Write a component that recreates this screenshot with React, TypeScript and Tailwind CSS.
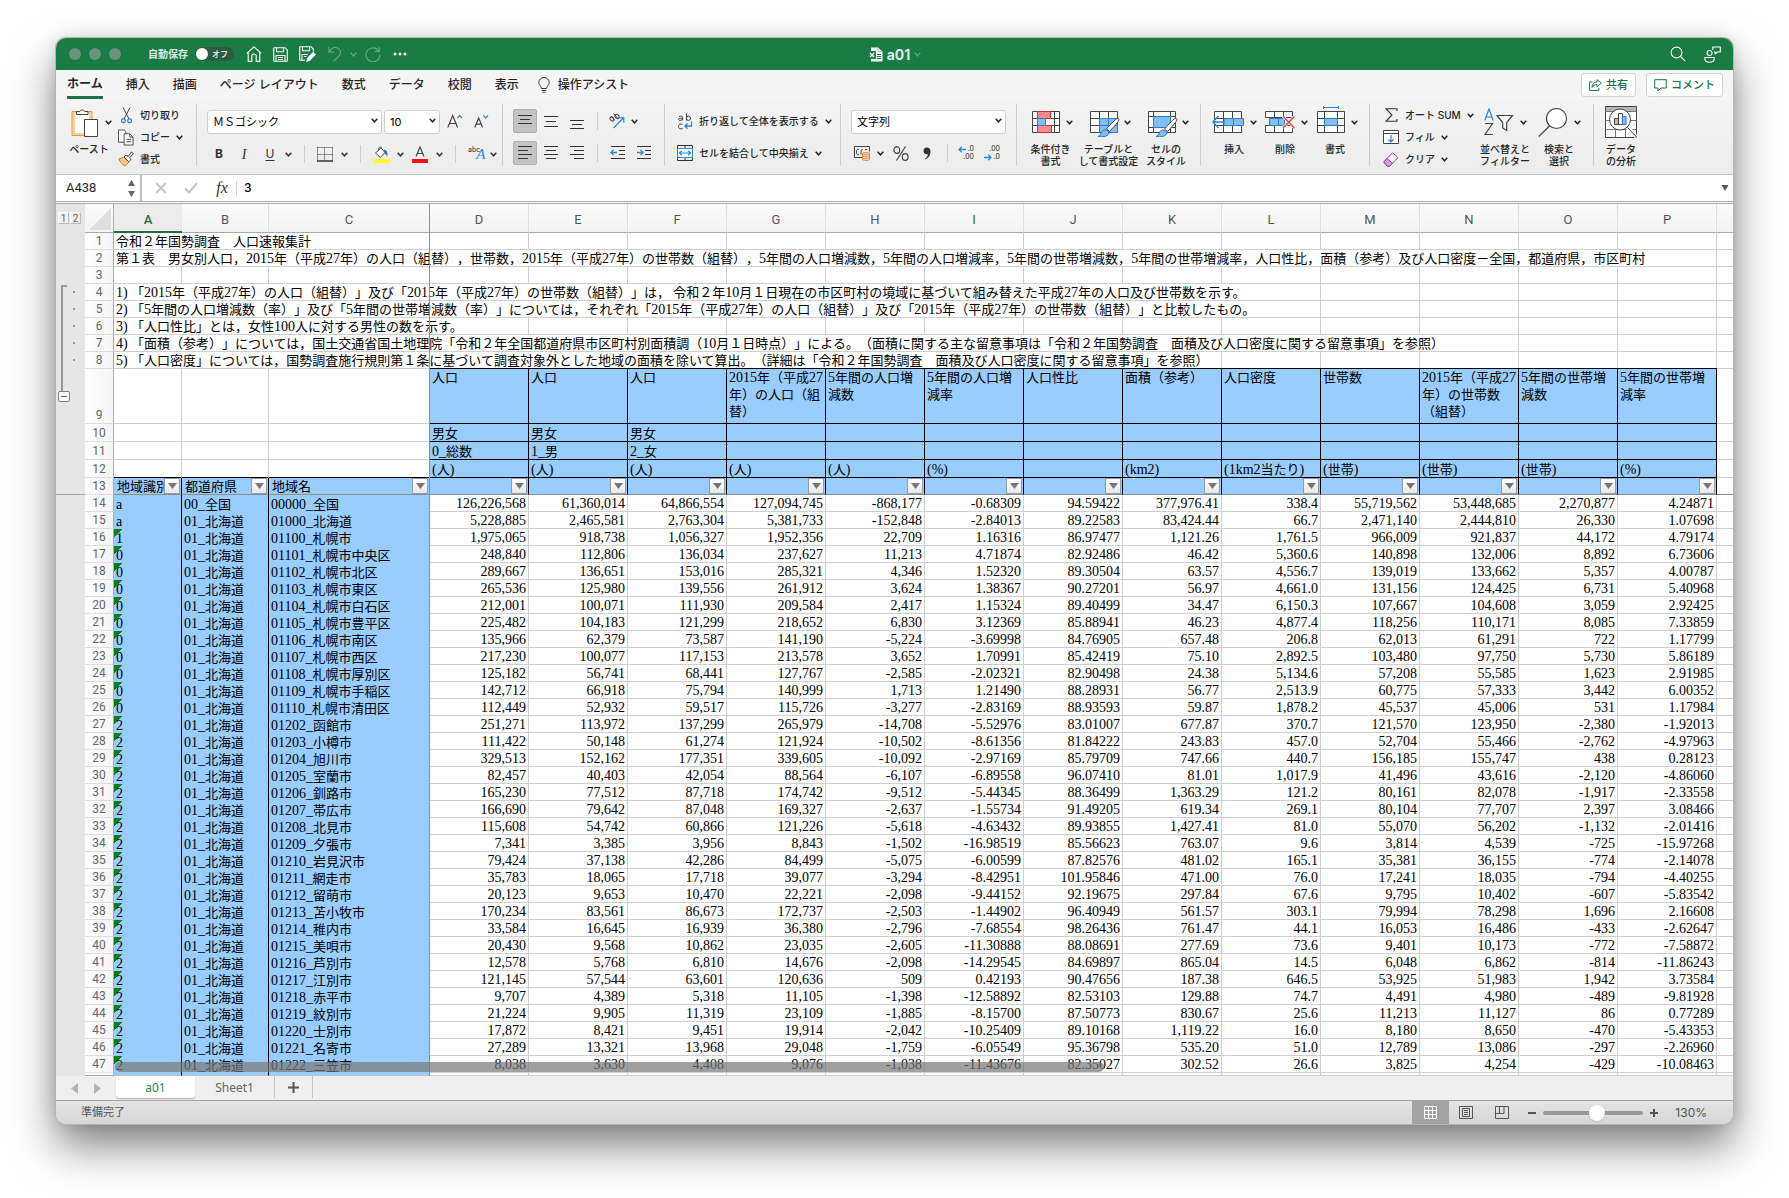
import { useState } from "react";
import type { ReactNode } from "react";

const letters = ["A", "B", "C", "D", "E", "F", "G", "H", "I", "J", "K", "L", "M", "N", "O", "P"]

// text of the rows above the table, span = how many columns the text runs over
const notes = [
  { row: 1, span: 3, text: "令和２年国勢調査　人口速報集計" },
  { row: 2, span: 16, text: "第１表　男女別人口，2015年（平成27年）の人口（組替），世帯数，2015年（平成27年）の世帯数（組替），5年間の人口増減数，5年間の人口増減率，5年間の世帯増減数，5年間の世帯増減率，人口性比，面積（参考）及び人口密度－全国，都道府県，市区町村" },
  { row: 3, span: 0, text: "" },
  { row: 4, span: 12, text: "1) 「2015年（平成27年）の人口（組替）」及び「2015年（平成27年）の世帯数（組替）」は， 令和２年10月１日現在の市区町村の境域に基づいて組み替えた平成27年の人口及び世帯数を示す。" },
  { row: 5, span: 12, text: "2) 「5年間の人口増減数（率）」及び「5年間の世帯増減数（率）」については，それぞれ「2015年（平成27年）の人口（組替）」及び「2015年（平成27年）の世帯数（組替）」と比較したもの。" },
  { row: 6, span: 4, text: "3) 「人口性比」とは，女性100人に対する男性の数を示す。" },
  { row: 7, span: 14, text: "4) 「面積（参考）」については，国土交通省国土地理院「令和２年全国都道府県市区町村別面積調（10月１日時点）」による。（面積に関する主な留意事項は「令和２年国勢調査　面積及び人口密度に関する留意事項」を参照）" },
  { row: 8, span: 11, text: "5) 「人口密度」については，国勢調査施行規則第１条に基づいて調査対象外とした地域の面積を除いて算出。（詳細は「令和２年国勢調査　面積及び人口密度に関する留意事項」を参照）" },
]

const titles = [
  "人口", "人口", "人口", "2015年（平成27年）の人口（組替）", "5年間の人口増減数", "5年間の人口増減率", "人口性比",
  "面積（参考）", "人口密度", "世帯数", "2015年（平成27年）の世帯数（組替）", "5年間の世帯増減数", "5年間の世帯増減率",
]

const subHeads = [
  { row: 10, cells: ["男女", "男女", "男女", "", "", "", "", "", "", "", "", "", ""] },
  { row: 11, cells: ["0_総数", "1_男", "2_女", "", "", "", "", "", "", "", "", "", ""] },
  { row: 12, cells: ["(人)", "(人)", "(人)", "(人)", "(人)", "(%)", "", "(km2)", "(1km2当たり)", "(世帯)", "(世帯)", "(世帯)", "(%)"] },
]

const data = `a|00_全国|00000_全国|126,226,568|61,360,014|64,866,554|127,094,745|-868,177|-0.68309|94.59422|377,976.41|338.4|55,719,562|53,448,685|2,270,877|4.24871
a|01_北海道|01000_北海道|5,228,885|2,465,581|2,763,304|5,381,733|-152,848|-2.84013|89.22583|83,424.44|66.7|2,471,140|2,444,810|26,330|1.07698
1|01_北海道|01100_札幌市|1,975,065|918,738|1,056,327|1,952,356|22,709|1.16316|86.97477|1,121.26|1,761.5|966,009|921,837|44,172|4.79174
0|01_北海道|01101_札幌市中央区|248,840|112,806|136,034|237,627|11,213|4.71874|82.92486|46.42|5,360.6|140,898|132,006|8,892|6.73606
0|01_北海道|01102_札幌市北区|289,667|136,651|153,016|285,321|4,346|1.52320|89.30504|63.57|4,556.7|139,019|133,662|5,357|4.00787
0|01_北海道|01103_札幌市東区|265,536|125,980|139,556|261,912|3,624|1.38367|90.27201|56.97|4,661.0|131,156|124,425|6,731|5.40968
0|01_北海道|01104_札幌市白石区|212,001|100,071|111,930|209,584|2,417|1.15324|89.40499|34.47|6,150.3|107,667|104,608|3,059|2.92425
0|01_北海道|01105_札幌市豊平区|225,482|104,183|121,299|218,652|6,830|3.12369|85.88941|46.23|4,877.4|118,256|110,171|8,085|7.33859
0|01_北海道|01106_札幌市南区|135,966|62,379|73,587|141,190|-5,224|-3.69998|84.76905|657.48|206.8|62,013|61,291|722|1.17799
0|01_北海道|01107_札幌市西区|217,230|100,077|117,153|213,578|3,652|1.70991|85.42419|75.10|2,892.5|103,480|97,750|5,730|5.86189
0|01_北海道|01108_札幌市厚別区|125,182|56,741|68,441|127,767|-2,585|-2.02321|82.90498|24.38|5,134.6|57,208|55,585|1,623|2.91985
0|01_北海道|01109_札幌市手稲区|142,712|66,918|75,794|140,999|1,713|1.21490|88.28931|56.77|2,513.9|60,775|57,333|3,442|6.00352
0|01_北海道|01110_札幌市清田区|112,449|52,932|59,517|115,726|-3,277|-2.83169|88.93593|59.87|1,878.2|45,537|45,006|531|1.17984
2|01_北海道|01202_函館市|251,271|113,972|137,299|265,979|-14,708|-5.52976|83.01007|677.87|370.7|121,570|123,950|-2,380|-1.92013
2|01_北海道|01203_小樽市|111,422|50,148|61,274|121,924|-10,502|-8.61356|81.84222|243.83|457.0|52,704|55,466|-2,762|-4.97963
2|01_北海道|01204_旭川市|329,513|152,162|177,351|339,605|-10,092|-2.97169|85.79709|747.66|440.7|156,185|155,747|438|0.28123
2|01_北海道|01205_室蘭市|82,457|40,403|42,054|88,564|-6,107|-6.89558|96.07410|81.01|1,017.9|41,496|43,616|-2,120|-4.86060
2|01_北海道|01206_釧路市|165,230|77,512|87,718|174,742|-9,512|-5.44345|88.36499|1,363.29|121.2|80,161|82,078|-1,917|-2.33558
2|01_北海道|01207_帯広市|166,690|79,642|87,048|169,327|-2,637|-1.55734|91.49205|619.34|269.1|80,104|77,707|2,397|3.08466
2|01_北海道|01208_北見市|115,608|54,742|60,866|121,226|-5,618|-4.63432|89.93855|1,427.41|81.0|55,070|56,202|-1,132|-2.01416
2|01_北海道|01209_夕張市|7,341|3,385|3,956|8,843|-1,502|-16.98519|85.56623|763.07|9.6|3,814|4,539|-725|-15.97268
2|01_北海道|01210_岩見沢市|79,424|37,138|42,286|84,499|-5,075|-6.00599|87.82576|481.02|165.1|35,381|36,155|-774|-2.14078
2|01_北海道|01211_網走市|35,783|18,065|17,718|39,077|-3,294|-8.42951|101.95846|471.00|76.0|17,241|18,035|-794|-4.40255
2|01_北海道|01212_留萌市|20,123|9,653|10,470|22,221|-2,098|-9.44152|92.19675|297.84|67.6|9,795|10,402|-607|-5.83542
2|01_北海道|01213_苫小牧市|170,234|83,561|86,673|172,737|-2,503|-1.44902|96.40949|561.57|303.1|79,994|78,298|1,696|2.16608
2|01_北海道|01214_稚内市|33,584|16,645|16,939|36,380|-2,796|-7.68554|98.26436|761.47|44.1|16,053|16,486|-433|-2.62647
2|01_北海道|01215_美唄市|20,430|9,568|10,862|23,035|-2,605|-11.30888|88.08691|277.69|73.6|9,401|10,173|-772|-7.58872
2|01_北海道|01216_芦別市|12,578|5,768|6,810|14,676|-2,098|-14.29545|84.69897|865.04|14.5|6,048|6,862|-814|-11.86243
2|01_北海道|01217_江別市|121,145|57,544|63,601|120,636|509|0.42193|90.47656|187.38|646.5|53,925|51,983|1,942|3.73584
2|01_北海道|01218_赤平市|9,707|4,389|5,318|11,105|-1,398|-12.58892|82.53103|129.88|74.7|4,491|4,980|-489|-9.81928
2|01_北海道|01219_紋別市|21,224|9,905|11,319|23,109|-1,885|-8.15700|87.50773|830.67|25.6|11,213|11,127|86|0.77289
2|01_北海道|01220_士別市|17,872|8,421|9,451|19,914|-2,042|-10.25409|89.10168|1,119.22|16.0|8,180|8,650|-470|-5.43353
2|01_北海道|01221_名寄市|27,289|13,321|13,968|29,048|-1,759|-6.05549|95.36798|535.20|51.0|12,789|13,086|-297|-2.26960
2|01_北海道|01222_三笠市|8,038|3,630|4,408|9,076|-1,038|-11.43676|82.35027|302.52|26.6|3,825|4,254|-429|-10.08463`
  .split("\n")
  .map((line) => line.split("|"))

const tabs = ["挿入", "描画", "ページ レイアウト", "数式", "データ", "校閲", "表示"]

const grey = "border-[#cfcfcf]"

export default function App() {
  return (
    <div className="min-h-screen overflow-hidden bg-white px-14 pt-[38px] pb-[74px] font-['Inter','Noto_Sans_CJK_JP',sans-serif] text-[#262626]">
      <div className="overflow-hidden rounded-[10px] bg-[#f0f0f0] shadow-[0_0_0_1px_#b4b4b4,0_22px_44px_rgba(0,0,0,0.5),0_0_14px_rgba(0,0,0,0.12)]">
        <TitleBar />
        <RibbonTabs />
        <Ribbon />
        <FormulaBar />
        <Sheet />
        <SheetTabs />
        <StatusBar />
      </div>
    </div>
  )
}

const Chevron = ({ className = "" }: { className?: string }) => (
  <svg className={`shrink-0 ${className}`} width="7" height="5" viewBox="0 0 7 5" fill="none" stroke="currentColor" strokeWidth="1.5">
    <path d="M0.7 0.8 3.5 3.8 6.3 0.8" />
  </svg>
)

const TitleBar = () => {
  const [autoSave, setAutoSave] = useState(false)
  return (
    <header className="relative flex h-8 items-center bg-[#1b7b44] pl-[13px] pr-3 text-white">
      <div className="flex gap-2">
        <button aria-label="閉じる" className="size-3 rounded-full bg-[#67947a]" />
        <button aria-label="しまう" className="size-3 rounded-full bg-[#67947a]" />
        <button aria-label="拡大" className="size-3 rounded-full bg-[#67947a]" />
      </div>
      <label htmlFor="autosave" className="ml-[27px] text-[10px] font-bold text-[#dcebe2]">自動保存</label>
      <button
        id="autosave"
        role="switch"
        aria-checked={autoSave}
        onClick={() => setAutoSave(!autoSave)}
        className="ml-2 flex h-[14px] w-[38px] items-center gap-1 rounded-full bg-[#2e5c41] text-[8px] font-medium"
      >
        <span className="size-3 rounded-full bg-white" />
        {autoSave ? "オン" : "オフ"}
      </button>
      <div className="ml-[12px] flex items-center gap-[11px]">
        <button aria-label="ホーム">
          <svg width="16" height="16" viewBox="0 0 16 16" fill="none" stroke="currentColor" strokeWidth="1.1">
            <path d="M0.8 7.4 8 0.8l7.2 6.6M2.2 6.2v9.2h3.6V10.2a2.2 2.2 0 0 1 4.4 0v5.2h3.6V6.2" strokeLinejoin="round" />
          </svg>
        </button>
        <button aria-label="保存">
          <svg width="15" height="15" viewBox="0 0 15 15" fill="none" stroke="currentColor" strokeWidth="1.1">
            <path d="M0.7 1.4a.7.7 0 0 1 .7-.7H12l2.3 2.3v10.6a.7.7 0 0 1-.7.7H1.4a.7.7 0 0 1-.7-.7zM3.5 0.7v4h7v-4M3 14.3V8.5h9v5.8M5 10.5h5M5 12.5h5" />
          </svg>
        </button>
        <button aria-label="名前を付けて保存">
          <svg width="17" height="16" viewBox="0 0 17 16" fill="none" stroke="currentColor" strokeWidth="1.1">
            <path d="M6 14.3H1.4a.7.7 0 0 1-.7-.7V1.4a.7.7 0 0 1 .7-.7H12l2.3 2.3v2.5M3.5 0.7v4h7v-4M3 14V8.5h6M5 10.5h2.5" />
            <path d="M8 15.2l.8-3.2 5.4-5.4 2 2-5.4 5.4z" fill="currentColor" />
          </svg>
        </button>
      </div>
      <div className="ml-[12px] flex items-center gap-2 text-[#64a581]">
        <button aria-label="元に戻す">
          <svg width="14" height="16" viewBox="0 0 14 16" fill="none" stroke="currentColor" strokeWidth="1.2">
            <path d="M1 0.8v5.4h5.4M1.2 6C3.5 2.2 7 0.6 10 2.2c3 1.7 3.4 5.2 1.2 7.6L5.500 15.4" />
          </svg>
        </button>
        <Chevron />
        <button aria-label="やり直し">
          <svg width="16" height="16" viewBox="0 0 16 16" fill="none" stroke="currentColor" strokeWidth="1.2">
            <path d="M14.3 0.8v4.6H9.8M14 5.2A7 7 0 1 0 15 9" />
          </svg>
        </button>
      </div>
      <button aria-label="その他" className="ml-3">
        <svg width="14" height="4" viewBox="0 0 14 4" fill="currentColor">
          <circle cx="2" cy="2" r="1.5" />
          <circle cx="7" cy="2" r="1.5" />
          <circle cx="12" cy="2" r="1.5" />
        </svg>
      </button>
      <div className="absolute inset-x-0 flex items-center justify-center gap-1 pointer-events-none">
        <svg width="15" height="15" viewBox="0 0 15 15">
          <path d="M3 0.5h7l4.5 4v10H3z" fill="#f4faf6" />
          <path d="M10 0.5v4h4.5" fill="none" stroke="#8fbfa2" />
          <path d="M9 7.5h4M9 9.5h4M9 11.5h4" stroke="#1b7b44" />
          <rect x="0" y="4" width="8" height="8" fill="#1d8048" />
          <path d="M2 6l4 4M6 6l-4 4" stroke="white" strokeWidth="1.2" />
        </svg>
        <h1 className="text-[14px] font-bold text-[#dcebe2]">a01</h1>
        <Chevron className="text-[#57a177]" />
      </div>
      <div className="ml-auto flex items-center gap-[18px]">
        <button aria-label="検索">
          <svg width="16" height="16" viewBox="0 0 16 16" fill="none" stroke="currentColor" strokeWidth="1.1">
            <circle cx="6.5" cy="6.5" r="5.4" />
            <path d="M10.4 10.4l4.8 4.8" />
          </svg>
        </button>
        <button aria-label="共同作業">
          <svg width="17" height="17" viewBox="0 0 17 17" fill="none" stroke="currentColor" strokeWidth="1.1">
            <circle cx="5.5" cy="7" r="2.5" />
            <path d="M0.8 11.5h9.4v1.2c0 2.3-1.8 3.5-4.7 3.5s-4.7-1.2-4.7-3.5zM8.8 4V1h7.5v5h-3l-2.2 2V6H10" strokeLinejoin="round" />
          </svg>
        </button>
      </div>
    </header>
  )
}

const RibbonTabs = () => (
  <nav className="flex h-[30px] items-center gap-[23px] bg-[#f5f5f5] pl-[11px] pr-2.5 text-[12px] font-medium">
    <button className="h-[28px] border-b-[3px] border-[#1e7145] pt-px font-bold">ホーム</button>
    {tabs.map((tab) => <button key={tab} className="whitespace-nowrap">{tab}</button>)}
    <button className="flex items-center gap-2 whitespace-nowrap -ml-1">
      <svg width="12" height="16" viewBox="0 0 12 16" fill="none" stroke="#404040">
        <path d="M3.5 11.5C3.5 9.5 0.8 8.3 0.8 5.5a5.2 5 0 0 1 10.4 0c0 2.8-2.700 4-2.700 6zM3.8 13.5h4.4M4.5 15.3h3" />
      </svg>
      操作アシスト
    </button>
    <div className="ml-auto flex gap-2.5 text-[11px] font-medium text-[#1e7145]">
      <button className="flex h-6 items-center gap-1 rounded-[3px] border border-[#d4d4d4] bg-white px-[7px]">
        <svg width="13" height="12" viewBox="0 0 13 12" fill="none" stroke="currentColor">
          <path d="M3.5 3H0.6v8.4h9.3V9M8 0.7l4.3 3.5L8 7.7V5.6C5.8 5.5 4.3 6.3 3 8.3 3.3 4.8 5 3 8 2.8z" strokeLinejoin="round" />
        </svg>
        共有
      </button>
      <button className="flex h-6 items-center gap-1 rounded-[3px] border border-[#d4d4d4] bg-white px-[7px]">
        <svg width="13" height="13" viewBox="0 0 13 13" fill="none" stroke="currentColor">
          <path d="M0.7 0.7h11.6v8.3H7l-3 3V9H0.7z" />
        </svg>
        コメント
      </button>
    </div>
  </nav>
)

const Divider = () => <div className="mt-1 h-[62px] w-px shrink-0 bg-[#cdcdcd]" />
const MiniDivider = () => <div className="mx-1 h-[18px] w-px shrink-0 bg-[#cdcdcd]" />

const Combo = ({ label, value, className }: { label: string; value: string; className: string }) => (
  <div className={`relative shrink-0 ${className}`}>
    <select aria-label={label} className="h-6 w-full appearance-none rounded-[3px] border border-[#cfcfcf] bg-white pl-[5px] text-[11px] text-black">
      <option>{value}</option>
    </select>
    <Chevron className="absolute right-[4px] top-[10px] pointer-events-none" />
  </div>
)

// small ribbon button with a text beside the icon
const SmallButton = ({ icon, label, drop = false }: { icon: ReactNode; label: string; drop?: boolean }) => (
  <button className="flex h-[22px] items-center gap-[6px] whitespace-nowrap text-[10px] font-medium">
    <span className="flex w-4 justify-center">{icon}</span>
    {label}
    {drop && <Chevron />}
  </button>
)

// large ribbon button, two lines of label below the icon
const LargeButton = ({ icon, lines, className, drop = true }: { icon: ReactNode; lines: string[]; className: string; drop?: boolean }) => (
  <button className={`flex shrink-0 flex-col items-center pt-[6px] ${className}`}>
    <span className={`flex h-8 items-center gap-[6px] ${drop ? "pl-1" : ""}`}>
      {icon}
      {drop && <Chevron />}
    </span>
    <span className="mt-[5px] whitespace-nowrap text-[10px] font-medium leading-[12px]">
      {lines.map((line) => <span key={line} className="block">{line}</span>)}
    </span>
  </button>
)

const Lines = ({ rows }: { rows: [number, number, number][] }) => (
  <svg width="16" height="16" viewBox="0 0 16 16" stroke="#333">
    {rows.map(([x1, x2, y]) => <path key={y} d={`M${x1} ${y}.5H${x2}`} />)}
  </svg>
)

const IconButton = ({ label, children, active = false }: { label: string; children: ReactNode; active?: boolean }) => (
  <button
    aria-label={label}
    className={active ? "flex size-6 shrink-0 items-center justify-center rounded-[2px] border border-[#b0b0b0] bg-[#c4c4c4]" : "flex size-6 shrink-0 items-center justify-center"}
  >
    {children}
  </button>
)

const Ribbon = () => (
  <div className="flex h-[75px] items-start overflow-hidden border-b border-[#c4c4c4] bg-linear-to-b from-[#f4f4f4] to-[#ececec]">
    <div className="flex w-[140px] shrink-0">
      <LargeButton
        className="w-[58px] pl-2"
        lines={["ペースト"]}
        icon={
          <svg width="28" height="31" viewBox="0 0 28 31" fill="white" stroke="#444">
            <path d="M1 4.5h20v24H1z" fill="#fbd49a" stroke="#e8973a" />
            <path d="M4 6h14v20H4z" stroke="none" />
            <path d="M5.5 7.5V4.5h3.3a2.6 2.6 0 0 1 4.8 0H17v3z" />
            <path d="M13.5 12.5h13v17h-13z" />
          </svg>
        }
      />
      <div className="ml-[4px] mt-[4px]">
        <SmallButton
          label="切り取り"
          icon={
            <svg width="11" height="17" viewBox="0 0 11 17" fill="none" stroke="#444">
              <path d="M2 0.5l6 11.5M9 0.5L3 12" />
              <circle cx="2.4" cy="13.8" r="1.9" stroke="#2b88d0" strokeWidth="1.3" />
              <circle cx="8.6" cy="13.8" r="1.9" stroke="#2b88d0" strokeWidth="1.3" />
            </svg>
          }
        />
        <SmallButton
          label="コピー"
          drop
          icon={
            <svg width="17" height="17" viewBox="0 0 17 17" fill="white" stroke="#444">
              <path d="M0.5 0.5h6l2 2v11h-8z" />
              <path d="M6.5 4.5h6l3.5 3.5v8.5h-9.5z" />
              <path d="M12.5 4.5v3.5h3.5M9 10.5h5M9 13h5" fill="none" />
            </svg>
          }
        />
        <SmallButton
          label="書式"
          icon={
            <svg width="16" height="16" viewBox="0 0 16 16" fill="white" stroke="#444">
              <path d="M0.8 8l5-1.8 5 5L7 15.2C4.5 13.5 2 11 0.8 8z" fill="#fbc48a" stroke="#e07c1e" />
              <path d="M6 6l2-2 2.2 1.5L13.5 1l2 1.8-4 3.7 1.3 2.2-2 2z" />
            </svg>
          }
        />
      </div>
    </div>
    <Divider />

    <div className="w-[305px] shrink-0 pl-[10px]">
      <div className="flex h-8 items-center pt-[10px]">
        <Combo label="フォント" value="ＭＳゴシック" className="w-[175px]" />
        <Combo label="フォント サイズ" value="10" className="ml-0.5 w-[56px]" />
        <button aria-label="フォント サイズの拡大" className="ml-[7px]">
          <svg width="16" height="16" viewBox="0 0 16 16" fill="none" stroke="#444" strokeWidth="1.2">
            <path d="M0.8 14.5L5.7 2.5l4.9 12M2.5 10.5h6.4" />
            <path d="M10.5 5l2.2-2.5L15 5" stroke="#2b88d0" />
          </svg>
        </button>
        <button aria-label="フォント サイズの縮小" className="ml-[11px]">
          <svg width="15" height="16" viewBox="0 0 15 16" fill="none" stroke="#444" strokeWidth="1.2">
            <path d="M0.8 14.5L4.7 5l3.9 9.5M2.2 11.2h5" />
            <path d="M9.5 2.5L11.7 5 14 2.5" stroke="#2b88d0" />
          </svg>
        </button>
      </div>
      <div className="flex h-8 items-center gap-2 pt-[12px] pl-[5px] text-[#333]">
        <button className="w-[14px] text-[12px] font-bold">B</button>
        <button className="ml-[3px] w-[14px] font-['Liberation_Serif',serif] text-[14px] italic">I</button>
        <button className="ml-[4px] w-[14px] text-[12px] underline underline-offset-2">U</button>
        <Chevron />
        <MiniDivider />
        <button aria-label="罫線">
          <svg width="16" height="15" viewBox="0 0 16 15" fill="none" stroke="#333">
            <path d="M0.5 0.5h15M0.5 7.5h15M0.5 0.5v13M7.5 0.5v13M15.5 0.5v13" strokeDasharray="1 1" />
            <path d="M0 14h16" strokeWidth="1.5" />
          </svg>
        </button>
        <Chevron />
        <MiniDivider />
        <button aria-label="塗りつぶしの色">
          <svg width="16" height="17" viewBox="0 0 16 17" fill="none" stroke="#444">
            <path d="M2.5 7L8 1.8l4 4.7-4.7 5zM5.5 4.5c0-4 3-4.5 3-2" fill="white" />
            <path d="M11.5 4c2 .5 2.5 2.5 2.5 5.5l-2-2.5z" fill="#1f6fb5" stroke="#1f6fb5" />
            <path d="M0 13h16v4H0z" fill="#ffff1f" stroke="none" />
          </svg>
        </button>
        <Chevron />
        <button aria-label="フォントの色">
          <svg width="16" height="17" viewBox="0 0 16 17" fill="none" stroke="#444" strokeWidth="1.2">
            <path d="M4 10.5L8 1l4 9.5M5.3 7.5h5.4" />
            <path d="M0 13h16v4H0z" fill="#fa0f1e" stroke="none" />
          </svg>
        </button>
        <Chevron />
        <MiniDivider />
        <button aria-label="ふりがな" className="flex items-end text-[7px] leading-[18px]">
          <span className="self-start leading-[8px]">abc</span>
          <span className="-ml-1 font-['Liberation_Serif',serif] text-[15px] italic leading-[16px] text-[#2b88d0]">A</span>
        </button>
        <Chevron className="-ml-[3px]" />
      </div>
    </div>
    <Divider />

    <div className="w-[161px] shrink-0 pl-[10px]">
      <div className="flex h-8 items-center gap-[2px] pt-[10px]">
        <IconButton label="上揃え" active><Lines rows={[[1, 15, 2], [3, 13, 6], [1, 15, 10]]} /></IconButton>
        <IconButton label="上下中央揃え"><Lines rows={[[1, 15, 3], [3, 13, 8], [1, 15, 13]]} /></IconButton>
        <IconButton label="下揃え"><Lines rows={[[1, 15, 7], [3, 13, 11], [1, 15, 15]]} /></IconButton>
        <span className="ml-[2px]"><MiniDivider /></span>
        <button aria-label="方向" className="ml-[4px] flex items-center gap-[6px]">
          <svg width="17" height="16" viewBox="0 0 17 16" fill="none" stroke="#444">
            <ellipse cx="4" cy="6" rx="2.3" ry="1.7" transform="rotate(45 4 6)" />
            <path d="M6.7 7.3L3.5 3.5M5.5 0.5l4.5 5" />
            <ellipse cx="9" cy="3.5" rx="2.3" ry="1.8" transform="rotate(45 9 3.5)" />
            <path d="M5.5 15L15.5 5M10.8 4.8h5v5" stroke="#2b88d0" strokeWidth="1.2" />
          </svg>
          <Chevron />
        </button>
      </div>
      <div className="flex h-8 items-center gap-[2px] pt-[10px]">
        <IconButton label="左揃え" active><Lines rows={[[1, 15, 1], [1, 11, 5], [1, 15, 9], [1, 11, 13]]} /></IconButton>
        <IconButton label="中央揃え"><Lines rows={[[1, 15, 1], [3, 13, 5], [1, 15, 9], [3, 13, 13]]} /></IconButton>
        <IconButton label="右揃え"><Lines rows={[[1, 15, 1], [5, 15, 5], [1, 15, 9], [5, 15, 13]]} /></IconButton>
        <span className="ml-[2px]"><MiniDivider /></span>
        <span className="ml-[2px] flex gap-[2px]">
          <IconButton label="インデントを減らす">
            <svg width="16" height="16" viewBox="0 0 16 16" fill="none" stroke="#333">
              <path d="M1 1.5h14M9 5.5h6M9 9.5h6M1 13.5h14" />
              <path d="M7 7.5H1M3.5 5L1 7.5 3.5 10" stroke="#2b88d0" strokeWidth="1.3" />
            </svg>
          </IconButton>
          <IconButton label="インデントを増やす">
            <svg width="16" height="16" viewBox="0 0 16 16" fill="none" stroke="#333">
              <path d="M1 1.5h14M9 5.5h6M9 9.5h6M1 13.5h14" />
              <path d="M1 7.5h6M4.5 5L7 7.5 4.5 10" stroke="#2b88d0" strokeWidth="1.3" />
            </svg>
          </IconButton>
        </span>
      </div>
    </div>
    <Divider />

    <div className="w-[175px] shrink-0 pl-[12px]">
      <div className="flex h-8 items-center pt-[10px]">
        <SmallButton
          label="折り返して全体を表示する"
          drop
          icon={
            <svg width="16" height="17" viewBox="0 0 16 17" fill="none" stroke="#444">
              <path d="M2 3.5c2-1 3.5-.5 3.5 1v2.8M5.5 5.2c-5-.3-4.5 2.3-2.5 2.2 1.3 0 2.500-.8 2.500-1.500M9.500 0.500v7" />
              <circle cx="11.5" cy="5.3" r="2.1" />
              <path d="M5.5 11.5c-2-1.2-4 0-4 2s2 3 4 2" />
              <path d="M14.5 8.5v4.5H8M10.5 10.5L8 13l2.5 2.7" stroke="#2b88d0" strokeWidth="1.3" />
            </svg>
          }
        />
      </div>
      <div className="flex h-8 items-center pt-[10px]">
        <SmallButton
          label="セルを結合して中央揃え"
          drop
          icon={
            <svg width="16" height="16" viewBox="0 0 16 16" fill="none" stroke="#333">
              <path d="M0.5 0.5h15v15h-15zM8 0.5v3M8 12.5v3" />
              <path d="M0.5 3.5h15v9h-15z" fill="white" stroke="#2b88d0" />
              <path d="M2.5 8h11M4.8 5.8L2.5 8l2.3 2.2M11.2 5.8L13.5 8l-2.3 2.2" stroke="#2b88d0" strokeWidth="1.2" />
            </svg>
          }
        />
      </div>
    </div>
    <Divider />

    <div className="w-[175px] shrink-0 pl-[10px]">
      <div className="flex h-8 items-center pt-[10px]">
        <Combo label="表示形式" value="文字列" className="w-[155px]" />
      </div>
      <div className="flex h-8 items-center pt-[10px] pl-[3px]">
        <button aria-label="通貨" className="flex items-center gap-[6px]">
          <svg width="17" height="16" viewBox="0 0 17 16" fill="none" stroke="#444">
            <path d="M8 12.5H0.5v-11h15v5" />
            <path d="M5 4.5c-2-.8-2.5.5-2.5 2.5s.5 3 2.5 2.5M9 4.5c-2.500 0-2 2-2 5M13 4.500h-2" />
            <path d="M8.5 8.5v6c0 1.2 7 1.2 7 0v-6c0-1.500-7-1.500-7 0s7 1.300 7 0M8.500 10.500c0 1.200 7 1.200 7 0M8.500 12.500c0 1.200 7 1.200 7 0" fill="#fde3cb" stroke="#e8863a" />
          </svg>
          <Chevron />
        </button>
        <button aria-label="パーセント" className="ml-[9px]">
          <svg width="16" height="15" viewBox="0 0 16 15" fill="none" stroke="#444" strokeWidth="1.2">
            <ellipse cx="3.8" cy="4" rx="2.9" ry="3.3" />
            <ellipse cx="12.2" cy="11" rx="2.9" ry="3.3" />
            <path d="M12.5 0.5l-9 14" />
          </svg>
        </button>
        <button aria-label="桁区切り" className="ml-[14px]">
          <svg width="8" height="13" viewBox="0 0 8 13" fill="#333">
            <path d="M3.8 0.5C6.3 0.5 7.6 2.2 7.5 5 7.3 8.7 5.3 11.3 2 12.5l-.3-.7c2-1.2 3-2.8 3.2-4.6C2.5 7.7 0.5 6.3 0.5 4c0-2 1.3-3.5 3.300-3.500z" />
          </svg>
        </button>
        <span className="ml-[12px]"><MiniDivider /></span>
        <button className="ml-[6px] flex w-4 flex-col text-[7px] leading-[8px]" aria-label="小数点以下の表示桁数を増やす">
          <span className="flex w-full items-center justify-between">
            <svg width="8" height="7" viewBox="0 0 8 7" fill="none" stroke="#2b88d0" strokeWidth="1.3"><path d="M8 3.5H1M3.8 0.7L1 3.5l2.8 2.8" /></svg>
            .0
          </span>
          <span className="w-full text-right">.00</span>
        </button>
        <button className="ml-[10px] flex w-4 flex-col text-[7px] leading-[8px]" aria-label="小数点以下の表示桁数を減らす">
          <span className="w-full text-right">.00</span>
          <span className="flex w-full items-center justify-between">
            <svg width="8" height="7" viewBox="0 0 8 7" fill="none" stroke="#2b88d0" strokeWidth="1.3"><path d="M0 3.5h7M4.2 0.7L7 3.5 4.2 6.3" /></svg>
            .0
          </span>
        </button>
      </div>
    </div>
    <Divider />

    <div className="flex w-[183px] shrink-0 pl-[5px]">
      <LargeButton
        className="w-[57px]"
        lines={["条件付き", "書式"]}
        icon={
          <svg width="28" height="22" viewBox="0 0 28 22" fill="white" stroke="#444">
            <path d="M0.5 0.5h27v21h-27zM5.5 0.5v21M22.5 0.5v21M0.5 7.5h27M0.5 14.5h27" />
            <path d="M5.5 0.5h13v7h-13zM5.5 14.5h14v7h-14z" fill="#f98a8f" stroke="#d8262c" />
            <path d="M5.5 7.5h8v7h-8z" fill="#83beec" stroke="#2b7cd3" />
          </svg>
        }
      />
      <LargeButton
        className="w-[59px]"
        lines={["テーブルと", "して書式設定"]}
        icon={
          <svg className="-mr-0.5" width="30" height="30" viewBox="0 0 30 30" fill="white" stroke="#444">
            <path d="M0.5 4.5h27v21h-27zM9.5 4.5v21M18.5 4.5v21M0.5 11.5h27M0.5 18.5h27" />
            <path d="M9.5 11.5h18v14h-18zM18.5 11.5v14M9.5 18.5h18" fill="#83beec" stroke="#2b7cd3" />
            <Brush />
          </svg>
        }
      />
      <LargeButton
        className="w-[56px]"
        lines={["セルの", "スタイル"]}
        icon={
          <svg className="-mr-0.5" width="30" height="30" viewBox="0 0 30 30" fill="white" stroke="#444">
            <path d="M0.5 4.5h27v21h-27zM5.5 4.5v21M22.5 4.5v21M0.5 9.5h27M0.5 20.5h27" />
            <path d="M5.5 9.5h17v11h-17z" fill="#83beec" stroke="#2b7cd3" />
            <Brush />
          </svg>
        }
      />
    </div>
    <Divider />

    <div className="flex w-[168px] shrink-0 pl-[7px]">
      <LargeButton
        className="w-[52px]"
        lines={["挿入"]}
        icon={
          <svg className="-ml-1" width="32" height="22" viewBox="0 0 32 22" fill="white" stroke="#444">
            <path d="M2.5 0.5h27v21h-27zM11.5 0.5v21M20.5 0.5v21M2.5 7.5h27M2.5 14.5h27" />
            <path d="M12 7.5h19.5v7H12zM21.5 7.5v7" fill="#83beec" stroke="#2b7cd3" />
            <path d="M12 11H1M6.5 5L1 11l5.5 6" fill="none" stroke="#2b88d0" strokeWidth="1.4" />
          </svg>
        }
      />
      <LargeButton
        className="w-[50px]"
        lines={["削除"]}
        icon={
          <svg className="-ml-0.5" width="30" height="22" viewBox="0 0 30 22" fill="white" stroke="#444">
            <path d="M0.5 0.5h27v6h-27zM0.5 14.5h27v7h-27zM9.5 0.5v6M18.5 0.5v6M9.5 14.5v7M18.5 14.5v7" />
            <path d="M4.5 7.5h15v7h-15zM13.5 7.5v7" fill="#83beec" stroke="#2b7cd3" />
            <path d="M18 5.5l11.5 11.5M29.5 5.5L18 17" fill="none" stroke="#f0f0f0" strokeWidth="3" />
            <path d="M18 5.5l11.5 11.5M29.5 5.5L18 17" fill="none" stroke="#ec4046" strokeWidth="1.4" />
          </svg>
        }
      />
      <LargeButton
        className="w-[50px]"
        lines={["書式"]}
        icon={
          <svg width="28" height="32" viewBox="0 0 28 32" fill="white" stroke="#444">
            <path d="M0.5 5.5h27v21h-27zM7.5 5.5v21M20.5 5.5v21M0.5 12.5h27M0.5 19.5h27" />
            <path d="M7.5 12.5h13v7h-13z" fill="#83beec" stroke="#2b7cd3" />
            <path d="M6.5 1.5h15M6.5 0v3M21.5 0v3" stroke="#2b88d0" />
          </svg>
        }
      />
    </div>
    <Divider />

    <div className="flex w-[223px] shrink-0 pl-[13px]">
      <div className="mt-[4px] w-[95px]">
        <SmallButton
          label="オート SUM"
          drop
          icon={
            <svg width="13" height="14" viewBox="0 0 13 14" fill="none" stroke="#333" strokeWidth="1.1">
              <path d="M12 3V0.7H1L7 7l-6 6.3h11V11" />
            </svg>
          }
        />
        <SmallButton
          label="フィル"
          drop
          icon={
            <svg width="16" height="14" viewBox="0 0 16 14" fill="white" stroke="#444">
              <path d="M0.5 0.5h15v13h-15zM0.5 3.5h15" />
              <path d="M8 5v7M5.5 9.5L8 12l2.5-2.5" stroke="#2b88d0" strokeWidth="1.2" fill="none" />
            </svg>
          }
        />
        <SmallButton
          label="クリア"
          drop
          icon={
            <svg width="16" height="15" viewBox="0 0 16 15" fill="white" stroke="#9b3fa8">
              <path d="M9.5 0.7l5.500 5-8.500 8.600H4.500L0.800 10z" />
              <path d="M4 6.3l5.500 5-3 3H4.500L0.800 10z" fill="#d99ade" />
            </svg>
          }
        />
      </div>
      <LargeButton
        className="w-[56px] -ml-px"
        lines={["並べ替えと", "フィルター"]}
        icon={
          <svg className="-ml-1" width="30" height="28" viewBox="0 0 30 28" fill="none" stroke="#444" strokeWidth="1.2">
            <path d="M0.8 12.5L5 1l4.2 11.5M2.2 9h5.6" stroke="#2b88d0" />
            <path d="M1 15.5h7.5L1 26.5h8" />
            <path d="M13 7.5h15.5l-5.8 7v8l-4-2.500v-5.500z" fill="white" />
          </svg>
        }
      />
      <LargeButton
        className="w-[52px]"
        lines={["検索と", "選択"]}
        icon={
          <svg className="-ml-1" width="30" height="30" viewBox="0 0 30 30" fill="white" stroke="#444" strokeWidth="1.2">
            <circle cx="18.5" cy="11.5" r="10" />
            <path d="M11.5 19L0.8 29.5" />
          </svg>
        }
      />
    </div>
    <Divider />

    <LargeButton
      className="w-[54px]"
      lines={["データ", "の分析"]}
      drop={false}
      icon={
        <svg width="32" height="32" viewBox="0 0 32 32" fill="white" stroke="#444">
          <path d="M0.5 0.5h31v31h-31z" />
          <path d="M1 1h30v4H1z" fill="#b5b5b5" stroke="none" />
          <path d="M0.5 5.5h31M0.5 14.5h31M0.5 23.5h31M10.5 23v8M20.5 23v8" stroke="#777" />
          <path d="M22 21l9.5 10" stroke="white" strokeWidth="4" />
          <circle cx="15" cy="13.5" r="10.5" />
          <path d="M22.5 21.5l9 9.5" />
          <path d="M9.5 12.5h4v6h-4z" fill="#bbb" />
          <path d="M13.5 7.5h4v11h-4z" />
          <path d="M17.5 10.5h3.5v8h-3.5z" fill="#83beec" stroke="#2b7cd3" />
        </svg>
      }
    />
  </div>
)

const Brush = () => (
  <>
    <path d="M28.5 11.5c1.5 1-.5 4-9 13l-3-2.5c7-8 10.500-11.500 12-10.500z" />
    <path d="M8 29.5c3.5-1 2.5-6 7-6.5 2.5-.2 4.500 2 3.500 4-1.200 2.300-6 3.500-10.500 2.500z" fill="#83beec" stroke="#1f6fb5" />
  </>
)

const FormulaBar = () => (
  <div className="border-b border-[#a8a8a8] bg-white pb-px">
    <div className="flex h-[27px] items-center border-b border-[#a8a8a8] bg-white">
      <div className="flex h-full w-[86px] items-center border-r-2 border-[#bdbdbd] pl-2.5">
        <input aria-label="名前ボックス" defaultValue="A438" className="w-[60px] font-['Roboto',sans-serif] text-[13px] outline-none" />
        <svg width="7" height="17" viewBox="0 0 7 17" fill="#666" className="ml-[2px]">
          <path d="M0 6L3.5 0 7 6zM0 11l3.5 6L7 11z" />
        </svg>
      </div>
      <button aria-label="キャンセル" className="ml-[13px]">
        <svg width="12" height="12" viewBox="0 0 12 12" stroke="#c4c4c4" strokeWidth="1.8"><path d="M1 1l10 10M11 1L1 11" /></svg>
      </button>
      <button aria-label="入力" className="ml-[17px]">
        <svg width="14" height="12" viewBox="0 0 14 12" fill="none" stroke="#c4c4c4" strokeWidth="2"><path d="M1 6.5l4 4L13 1" /></svg>
      </button>
      <button aria-label="関数の挿入" className="ml-[16px] w-4 font-['Liberation_Serif',serif] text-[16px] italic text-[#333]">fx</button>
      <div className="ml-[6px] h-[15px] w-px bg-[#d6d6d6]" />
      <input aria-label="数式バー" defaultValue="3" className="ml-[7px] min-w-0 flex-1 text-[12px] font-medium text-black outline-none" />
      <svg width="8" height="6" viewBox="0 0 8 6" fill="#555" className="mr-1"><path d="M0.5 0h7L4 6z" /></svg>
    </div>
  </div>
)

// latin runs are set one size larger than the japanese text around them
const Text = ({ children }: { children: string }) => (
  <>
    {children.split(/([!-~]+)/).map((part, i) => (
      i % 2 ? <span key={i} className="text-[14px] leading-[0]">{part}</span> : part
    ))}
  </>
)

const RowHead = ({ n, className = "" }: { n: number; className?: string }) => (
  <th scope="row" className={`border-r border-b border-r-[#ababab] border-b-[#dedede] bg-linear-to-r from-white to-[#f4f4f4] p-0 text-center align-bottom font-['Roboto',sans-serif] text-[12px] font-normal text-[#666] ${className}`}>{n}</th>
)

const Blank = ({ count }: { count: number }) => (
  <>
    {Array.from({ length: count }, (_, i) => <td key={i} className={`border-r border-b p-0 last:border-r-0 ${grey}`} />)}
  </>
)

const FilterButton = ({ label }: { label: string }) => (
  <button aria-label={`${label} フィルター`} className="flex h-4 w-4 shrink-0 items-center justify-center border border-[#8d9db0] bg-linear-to-b from-white to-[#e9e9e9]">
    <svg width="9" height="6" viewBox="0 0 9 6" fill="#777"><path d="M0 0h9L4.5 6z" /></svg>
  </button>
)

const Sheet = () => (
  <main className="flex bg-white">
    <div className="flex w-[29px] shrink-0 flex-col bg-[#e6e6e6]">
      <div className="h-[291px] border-b border-[#a3a3a3]">
        <div className="flex h-[81px] items-start gap-px pt-[8px] pl-[2px] font-['Roboto',sans-serif] text-[10px] leading-[11px] text-[#666]">
          <button className="h-3 w-[11px] border border-r-[#bbb] border-b-[#bbb] border-t-white border-l-white bg-[#efefef]">1</button>
          <button className="h-3 w-[11px] border border-r-[#bbb] border-b-[#bbb] border-t-white border-l-white bg-[#efefef]">2</button>
        </div>
        <div className="flex h-[106px]">
          <div className="ml-[5px] w-[6px] border-t-2 border-l-2 border-[#999]" />
          <div className="ml-[6px] flex flex-col gap-[15px] pt-[6px]">
            {[4, 5, 6, 7, 8].map((n) => <span key={n} className="size-[2px] bg-[#999]" />)}
          </div>
        </div>
        <button aria-label="グループを折りたたむ" className="ml-[2px] flex h-[11px] w-3 items-center justify-center rounded-[2px] border border-[#808080] bg-white">
          <span className="h-px w-[6px] bg-[#666]" />
        </button>
      </div>
    </div>
    <div className="relative min-w-0 flex-1 overflow-hidden">
      <table className="w-full table-fixed border-separate border-spacing-0 font-['Liberation_Serif','Noto_Sans_CJK_JP',serif] text-[13px] leading-[15px] text-black [text-spacing-trim:space-all]">
        <colgroup>
          <col className="w-[29px]" />
          <col className="w-[68px]" />
          <col className="w-[87px]" />
          <col className="w-[161px]" />
          {titles.map((_, i) => <col key={i} className="w-[99px]" />)}
          <col />
        </colgroup>
        <thead>
          <tr className="h-[29px] bg-linear-to-b from-[#fbfbfb] to-[#f3f3f3] font-['Roboto',sans-serif] text-[#555]">
            <th className="border-r border-b border-[#ababab] p-0 align-bottom">
              <svg width="22" height="22" viewBox="0 0 22 22" className="ml-1 mb-[2px]" fill="#dedede"><path d="M22 0v22H0z" /></svg>
            </th>
            {letters.map((letter) => (
              <th
                key={letter}
                className={letter === "A"
                  ? "border-b-2 border-[#1e7145] bg-[#ececec] p-0 pt-[3px] font-medium text-[#1e7145]"
                  : "border-r border-b border-r-[#e0e0e0] border-b-[#ababab] p-0 pt-[2px] font-normal"}
              >
                {letter}
              </th>
            ))}
            <th className="border-b border-[#ababab] p-0" />
          </tr>
        </thead>
        <tbody>
          {notes.map(({ row, span, text }) => (
            <tr key={row} className={row === 8 ? "h-4" : "h-[17px]"}>
              <RowHead n={row} className={row === 8 ? "border-b-0" : ""} />
              {span > 0 && (
                <td colSpan={span} className={`whitespace-nowrap border-r p-0 pt-px pl-[2px] ${grey} ${row === 8 ? "" : "border-b"}`}>
                  <Text>{text}</Text>
                </td>
              )}
              {row === 8
                ? Array.from({ length: 17 - span }, (_, i) => <td key={i} className={`border-r p-0 last:border-r-0 ${grey}`} />)
                : <Blank count={17 - span} />}
            </tr>
          ))}
          <tr className="h-14">
            <RowHead n={9} className="border-t border-t-[#dedede]" />
            {[0, 1, 2].map((i) => <td key={i} className={`border-t border-r border-b ${grey}`} />)}
            {titles.map((title, i) => (
              <td key={i} className="border-t border-r border-b border-black bg-[#9cf] p-0 pl-[2px] align-top leading-[17px]"><Text>{title}</Text></td>
            ))}
            <td className={`border-t border-b ${grey}`} />
          </tr>
          {subHeads.map(({ row, cells }) => (
            <tr key={row} className="h-[18px]">
              <RowHead n={row} />
              {[0, 1, 2].map((i) => (
                <td key={i} className={row === 12 ? "border-r border-b border-r-[#cfcfcf] border-b-black" : "border-r border-b border-[#cfcfcf]"} />
              ))}
              {cells.map((cell, i) => (
                <td key={i} className="border-r border-b border-black bg-[#9cf] p-0 pt-px pl-[2px]"><Text>{cell}</Text></td>
              ))}
              <td className={`border-b ${grey}`} />
            </tr>
          ))}
          <tr className="h-[17px]">
            <RowHead n={13} className="border-b-[#8f8f8f]" />
            {["地域識別", "都道府県", "地域名"].map((name) => (
              <td key={name} className="overflow-hidden border-r border-b border-r-black border-b-[#8f8f8f] bg-[#9cf] p-0">
                <div className="flex h-4 pr-px">
                  <span className="min-w-0 flex-1 overflow-hidden whitespace-nowrap pt-px pl-[3px]">{name}</span>
                  <FilterButton label={name} />
                </div>
              </td>
            ))}
            {titles.map((title, i) => (
              <td key={i} className="border-r border-b border-r-black border-b-[#8f8f8f] bg-[#9cf] p-0">
                <div className="flex h-4 justify-end pr-px"><FilterButton label={title} /></div>
              </td>
            ))}
            <td className="border-b border-[#8f8f8f]" />
          </tr>
          {data.map((cells, r) => (
            <tr key={r} className="h-[17px]">
              <RowHead n={r + 14} />
              {cells.map((cell, c) => {
                if (c === 0) {
                  return (
                    <td
                      key={c}
                      className={r > 1
                        ? "border-r border-black bg-[#9cf] bg-[linear-gradient(135deg,#0e7c1c_6px,transparent_6px)] p-0 pt-[2px] pl-[2px]"
                        : "border-r border-black bg-[#9cf] p-0 pt-[2px] pl-[2px]"}
                    >
                      <Text>{cell}</Text>
                    </td>
                  )
                }
                if (c < 3) {
                  return <td key={c} className="whitespace-nowrap border-r border-black bg-[#9cf] p-0 pt-px pl-[2px]"><Text>{cell}</Text></td>
                }
                return <td key={c} className={`border-r border-b p-0 pt-px pr-[2px] text-right ${grey}`}><Text>{cell}</Text></td>
              })}
              <td className={`border-b ${grey}`} />
            </tr>
          ))}
          <tr className="h-[3px]">
            <td className="border-r border-b border-[#ababab] p-0" />
            {[0, 1, 2].map((i) => <td key={i} className="border-r border-b border-r-black border-b-[#c4c4c4] bg-[#9cf] p-0" />)}
            <Blank count={14} />
          </tr>
        </tbody>
      </table>
      {/* frozen pane edge and the floating scroll bar */}
      <div className="absolute inset-y-0 left-[344px] w-px bg-[#8f8f8f]" />
      <div className="absolute bottom-[4px] left-[30px] h-2.5 w-3/5 rounded-full bg-[#777]/70" />
    </div>
  </main>
)

const SheetTabs = () => (
  <div className="flex h-[25px] items-start border-b border-[#a3a3a3] bg-[#efefef] font-['Noto_Sans',sans-serif] text-[12px] text-[#666]">
    <div className="flex h-full w-[60px] items-center gap-4 pl-[15px]">
      <button aria-label="前のシート"><svg width="7" height="11" viewBox="0 0 7 11" fill="#b3b3b3"><path d="M7 0v11L0 5.5z" /></svg></button>
      <button aria-label="次のシート"><svg width="7" height="11" viewBox="0 0 7 11" fill="#b3b3b3"><path d="M0 0v11l7-5.5z" /></svg></button>
    </div>
    <button className="h-[22px] w-[79px] rounded-b-[3px] bg-white pt-px text-[#1e8449] shadow-[0_1px_1px_#aaa]">a01</button>
    <button className="h-[22px] w-[80px] border-r border-[#c4c4c4] pt-px">Sheet1</button>
    <button aria-label="シートの追加" className="flex h-[22px] w-[38px] items-center justify-center border-r border-[#c4c4c4] pt-px">
      <svg width="11" height="11" viewBox="0 0 11 11" stroke="#555" strokeWidth="2"><path d="M5.5 0v11M0 5.5h11" /></svg>
    </button>
  </div>
)

const StatusBar = () => {
  const [zoom, setZoom] = useState(54)
  return (
    <footer className="flex h-[23px] items-center bg-linear-to-b from-[#e4e4e4] to-[#d6d6d6] pl-[25px] text-[11px] text-[#555]">
      <span>準備完了</span>
      <button aria-label="標準" className="ml-auto flex h-full w-[37px] items-center justify-center bg-[#a3a3a3]">
        <svg width="13" height="13" viewBox="0 0 13 13" fill="none" stroke="white"><path d="M0.5 0.5h12v12h-12zM4.5 0.5v12M8.5 0.5v12M0.5 4.5h12M0.5 8.5h12" /></svg>
      </button>
      <button aria-label="ページ レイアウト表示" className="ml-2.5">
        <svg width="14" height="13" viewBox="0 0 14 13" fill="none" stroke="#555"><path d="M0.5 0.5h13v12h-13zM3.5 2.5h7v8h-7zM5 4.5h4M5 6.5h4M5 8.5h4" /></svg>
      </button>
      <button aria-label="改ページ プレビュー" className="ml-[22px]">
        <svg width="14" height="13" viewBox="0 0 14 13" fill="none" stroke="#555"><path d="M0.5 0.5h13v12h-13zM4.5 0.5v7h4.500V0.500M0.500 7.500h4" /></svg>
      </button>
      <button aria-label="縮小" className="ml-[19px]">
        <svg width="8" height="8" viewBox="0 0 8 8" stroke="#555" strokeWidth="2"><path d="M0 4h8" /></svg>
      </button>
      <input
        type="range"
        aria-label="ズーム"
        value={zoom}
        onChange={(e) => setZoom(Number(e.target.value))}
        className="ml-[7px] w-[100px] appearance-none bg-transparent [&::-webkit-slider-runnable-track]:h-1 [&::-webkit-slider-runnable-track]:rounded-full [&::-webkit-slider-runnable-track]:bg-[#9a9a9a] [&::-webkit-slider-thumb]:-mt-1.5 [&::-webkit-slider-thumb]:size-4 [&::-webkit-slider-thumb]:appearance-none [&::-webkit-slider-thumb]:rounded-full [&::-webkit-slider-thumb]:bg-white [&::-webkit-slider-thumb]:shadow-sm"
      />
      <button aria-label="拡大" className="ml-[7px]">
        <svg width="8" height="8" viewBox="0 0 8 8" stroke="#555" strokeWidth="2"><path d="M0 4h8M4 0v8" /></svg>
      </button>
      <span className="ml-[17px] mr-[26px] text-[12px]">130%</span>
    </footer>
  )
}
